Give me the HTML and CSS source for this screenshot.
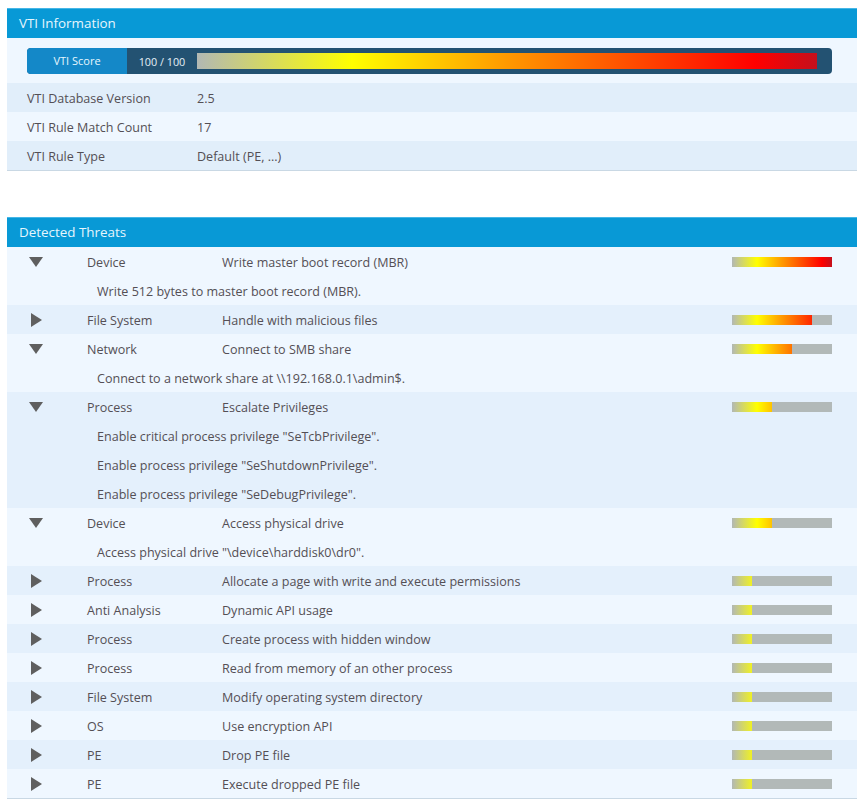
FILE: index.html
```html
<!DOCTYPE html>
<html lang="en">
<head>
    <meta charset="UTF-8">
    <title>VTI Information</title>
    <link rel="stylesheet" href="styles.css">
</head>
<body>
    <section class="panel info-panel">
        <h2 class="panel-title">VTI Information</h2>
        <div class="score-wrap">
            <div class="score">
                <div class="score-label">VTI Score</div>
                <div class="score-value">100 / 100</div>
                <div class="score-track"><div class="score-fill"></div></div>
            </div>
        </div>
        <div class="info-row shade"><span class="info-key">VTI Database Version</span><span class="info-val">2.5</span></div>
        <div class="info-row"><span class="info-key">VTI Rule Match Count</span><span class="info-val">17</span></div>
        <div class="info-row shade"><span class="info-key">VTI Rule Type</span><span class="info-val">Default (PE, ...)</span></div>
    </section>

    <section class="panel">
        <h2 class="panel-title">Detected Threats</h2>

        <div class="group">
            <div class="threat">
                <svg class="arrow arrow-down" viewBox="0 0 14 10"><polygon points="0,0 14,0 7,10"/></svg>
                <span class="category">Device</span>
                <span class="name">Write master boot record (MBR)</span>
                <div class="meter"><div class="meter-fill w100"></div></div>
            </div>
            <div class="detail">Write 512 bytes to master boot record (MBR).</div>
        </div>

        <div class="group shade">
            <div class="threat">
                <svg class="arrow" viewBox="0 0 14 14"><polygon points="2,0 13,7 2,14"/></svg>
                <span class="category">File System</span>
                <span class="name">Handle with malicious files</span>
                <div class="meter"><div class="meter-fill w80"></div></div>
            </div>
        </div>

        <div class="group">
            <div class="threat">
                <svg class="arrow arrow-down" viewBox="0 0 14 10"><polygon points="0,0 14,0 7,10"/></svg>
                <span class="category">Network</span>
                <span class="name">Connect to SMB share</span>
                <div class="meter"><div class="meter-fill w60"></div></div>
            </div>
            <div class="detail">Connect to a network share at \\192.168.0.1\admin$.</div>
        </div>

        <div class="group shade">
            <div class="threat">
                <svg class="arrow arrow-down" viewBox="0 0 14 10"><polygon points="0,0 14,0 7,10"/></svg>
                <span class="category">Process</span>
                <span class="name">Escalate Privileges</span>
                <div class="meter"><div class="meter-fill w40"></div></div>
            </div>
            <div class="detail">Enable critical process privilege "SeTcbPrivilege".</div>
            <div class="detail">Enable process privilege "SeShutdownPrivilege".</div>
            <div class="detail">Enable process privilege "SeDebugPrivilege".</div>
        </div>

        <div class="group">
            <div class="threat">
                <svg class="arrow arrow-down" viewBox="0 0 14 10"><polygon points="0,0 14,0 7,10"/></svg>
                <span class="category">Device</span>
                <span class="name">Access physical drive</span>
                <div class="meter"><div class="meter-fill w40"></div></div>
            </div>
            <div class="detail">Access physical drive "\device\harddisk0\dr0".</div>
        </div>

        <div class="group shade">
            <div class="threat">
                <svg class="arrow" viewBox="0 0 14 14"><polygon points="2,0 13,7 2,14"/></svg>
                <span class="category">Process</span>
                <span class="name">Allocate a page with write and execute permissions</span>
                <div class="meter"><div class="meter-fill w20"></div></div>
            </div>
        </div>

        <div class="group">
            <div class="threat">
                <svg class="arrow" viewBox="0 0 14 14"><polygon points="2,0 13,7 2,14"/></svg>
                <span class="category">Anti Analysis</span>
                <span class="name">Dynamic API usage</span>
                <div class="meter"><div class="meter-fill w20"></div></div>
            </div>
        </div>

        <div class="group shade">
            <div class="threat">
                <svg class="arrow" viewBox="0 0 14 14"><polygon points="2,0 13,7 2,14"/></svg>
                <span class="category">Process</span>
                <span class="name">Create process with hidden window</span>
                <div class="meter"><div class="meter-fill w20"></div></div>
            </div>
        </div>

        <div class="group">
            <div class="threat">
                <svg class="arrow" viewBox="0 0 14 14"><polygon points="2,0 13,7 2,14"/></svg>
                <span class="category">Process</span>
                <span class="name">Read from memory of an other process</span>
                <div class="meter"><div class="meter-fill w20"></div></div>
            </div>
        </div>

        <div class="group shade">
            <div class="threat">
                <svg class="arrow" viewBox="0 0 14 14"><polygon points="2,0 13,7 2,14"/></svg>
                <span class="category">File System</span>
                <span class="name">Modify operating system directory</span>
                <div class="meter"><div class="meter-fill w20"></div></div>
            </div>
        </div>

        <div class="group">
            <div class="threat">
                <svg class="arrow" viewBox="0 0 14 14"><polygon points="2,0 13,7 2,14"/></svg>
                <span class="category">OS</span>
                <span class="name">Use encryption API</span>
                <div class="meter"><div class="meter-fill w20"></div></div>
            </div>
        </div>

        <div class="group shade">
            <div class="threat">
                <svg class="arrow" viewBox="0 0 14 14"><polygon points="2,0 13,7 2,14"/></svg>
                <span class="category">PE</span>
                <span class="name">Drop PE file</span>
                <div class="meter"><div class="meter-fill w20"></div></div>
            </div>
        </div>

        <div class="group">
            <div class="threat">
                <svg class="arrow" viewBox="0 0 14 14"><polygon points="2,0 13,7 2,14"/></svg>
                <span class="category">PE</span>
                <span class="name">Execute dropped PE file</span>
                <div class="meter"><div class="meter-fill w20"></div></div>
            </div>
        </div>
    </section>
</body>
</html>
```
FILE: styles.css
```css
body {
    margin: 8px 8px 0 7px;
    background: #fff;
    font-family: "Open Sans", "Noto Sans", sans-serif;
    font-size: 12.55px;
    color: #544f55;
}
.panel {
    width: 850px;
    background: #eff7ff;
    border-bottom: 1px solid #c9d8e4;
}
.info-panel {
    margin-bottom: 46px;
}
.panel-title {
    margin: 0;
    height: 29px;
    padding-left: 12px;
    background: #0899d6;
    border-top: 1px solid #45b6e6;
    color: #e6f6fd;
    font-size: 13.4px;
    font-weight: 400;
    line-height: 29px;
}
.shade {
    background: #e4f0fc;
}
.score-wrap {
    padding: 10px 25px 9px 20px;
}
.score {
    display: flex;
    align-items: center;
    height: 26px;
    background: #235272;
    border-radius: 4px;
    overflow: hidden;
}
.score-label {
    width: 100px;
    height: 26px;
    background: #1488c8;
    color: #e6f6fd;
    font-size: 11px;
    line-height: 26px;
    text-align: center;
}
.score-value {
    width: 70px;
    color: #e6f0f6;
    font-size: 10.8px;
    text-align: center;
}
.score-track {
    width: 620px;
    height: 16px;
}
.score-fill {
    height: 16px;
    background: linear-gradient(to right, #b2b8b4, #ffff00 25%, #ff9900 50%, #ff0000 90%, #c4101c);
}
.info-row {
    display: flex;
    height: 29px;
    padding-left: 20px;
    align-items: center;
}
.info-row.shade {
    background: #e1eefa;
}
.info-key {
    width: 170px;
}
.info-key, .info-val, .category, .name {
    padding-top: 2px;
}
.threat {
    display: flex;
    align-items: center;
    height: 29px;
}
.arrow {
    flex: none;
    width: 14px;
    height: 14px;
    margin: 1px 44px 0 22px;
    fill: #5f5f5f;
}
.arrow-down {
    height: 10px;
}
.category {
    width: 135px;
}
.name {
    width: 510px;
}
.meter {
    width: 100px;
    height: 10px;
    margin-top: 1px;
    background: #b2b9b8;
}
.meter-fill {
    height: 10px;
    background: linear-gradient(to right, #b2b8b4, #ffff00 25%, #ff9900 50%, #ff0000 90%, #c4101c);
    background-size: 100px 10px;
}
.w100 { width: 100px; }
.w80 { width: 80px; }
.w60 { width: 60px; }
.w40 { width: 40px; }
.w20 { width: 20px; }
.detail {
    height: 29px;
    padding-left: 90px;
    line-height: 31px;
}
```
